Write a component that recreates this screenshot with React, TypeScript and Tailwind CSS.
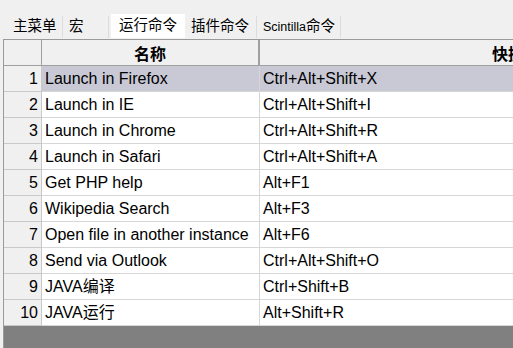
import React from 'react';

// ── Data ───────────────────────────────────────────────────────────────

const tabs = [
  { label: '主菜单', w: 'w-[56px]' },
  { label: '宏', w: 'w-[46px]' },
  { label: '运行命令', w: 'w-[74px]', active: true },
  { label: '插件命令', w: 'w-[72px]' },
  { label: 'Scintilla', cjk: '命令', w: 'w-[84px]' },
];

const rows = [
  { name: 'Launch in Firefox', key: 'Ctrl+Alt+Shift+X' },
  { name: 'Launch in IE', key: 'Ctrl+Alt+Shift+I' },
  { name: 'Launch in Chrome', key: 'Ctrl+Alt+Shift+R' },
  { name: 'Launch in Safari', key: 'Ctrl+Alt+Shift+A' },
  { name: 'Get PHP help', key: 'Alt+F1' },
  { name: 'Wikipedia Search', key: 'Alt+F3' },
  { name: 'Open file in another instance', key: 'Alt+F6' },
  { name: 'Send via Outlook', key: 'Ctrl+Alt+Shift+O' },
  { name: 'JAVA编译', key: 'Ctrl+Shift+B' },
  { name: 'JAVA运行', key: 'Alt+Shift+R' },
];

const font = "font-['Liberation_Sans','Noto_Sans_CJK_SC',sans-serif]";

// ── Page ───────────────────────────────────────────────────────────────

export default function App() {
  return (
    <div className={`w-[513px] h-[348px] overflow-hidden bg-[#f0f0f0] ${font} flex flex-col`}>
      {/* tab strip */}
      <div className="h-[39px] shrink-0 flex items-end pl-[7px] pb-[1px]">
        {tabs.map((t) =>
          t.active ? (
            <div
              key={t.label}
              className={`${t.w} h-[24px] bg-white flex items-center justify-center text-[14.5px] text-black ml-[2px] whitespace-nowrap`}
            >
              {t.label}
            </div>
          ) : (
            <div
              key={t.label}
              className={`${t.w} h-[22px] border-r border-[#dcdcdc] flex items-center px-[6px] text-[14.5px] text-black whitespace-nowrap`}
            >
              {t.cjk ? (
                <>
                  <span className="text-[12.5px]">{t.label}</span>
                  {t.cjk}
                </>
              ) : (
                t.label
              )}
            </div>
          )
        )}
      </div>

      {/* grid */}
      <div className="flex-1 ml-[3px] border-t border-l border-[#9a9a9a] bg-[#808080] overflow-hidden">
        <div className="flex h-[26px] bg-[#f0f0f0] border-b border-[#a0a0a0]">
          <div className="w-[38px] shrink-0 border-r border-[#a0a0a0]" />
          <div className="w-[218px] shrink-0 border-r-2 border-double border-[#a0a0a0] flex items-center justify-center font-['Noto_Sans_CJK_SC',serif] font-bold text-[16px] text-black">
            名称
          </div>
          <div className="w-[512px] shrink-0 flex items-center justify-center font-['Noto_Sans_CJK_SC',serif] font-bold text-[16px] text-black">
            快捷键
          </div>
        </div>
        {rows.map((r, i) => (
          <div key={r.name} className="flex h-[26px] text-[16px] text-black">
            <div className="w-[38px] shrink-0 bg-[#f0f0f0] border-r border-b border-[#c8c8c8] flex items-center justify-end pr-[3px]">
              {i + 1}
            </div>
            <div
              className={`w-[218px] shrink-0 border-r border-b border-[#d6d6d6] flex items-center pl-[3px] whitespace-nowrap ${
                i === 0 ? 'bg-[#c9c9d6]' : 'bg-white'
              }`}
            >
              {r.name}
            </div>
            <div
              className={`w-[512px] shrink-0 border-b border-[#d6d6d6] flex items-center pl-[3px] ${
                i === 0 ? 'bg-[#c9c9d6]' : 'bg-white'
              }`}
            >
              {r.key}
            </div>
          </div>
        ))}
      </div>
    </div>
  );
}
